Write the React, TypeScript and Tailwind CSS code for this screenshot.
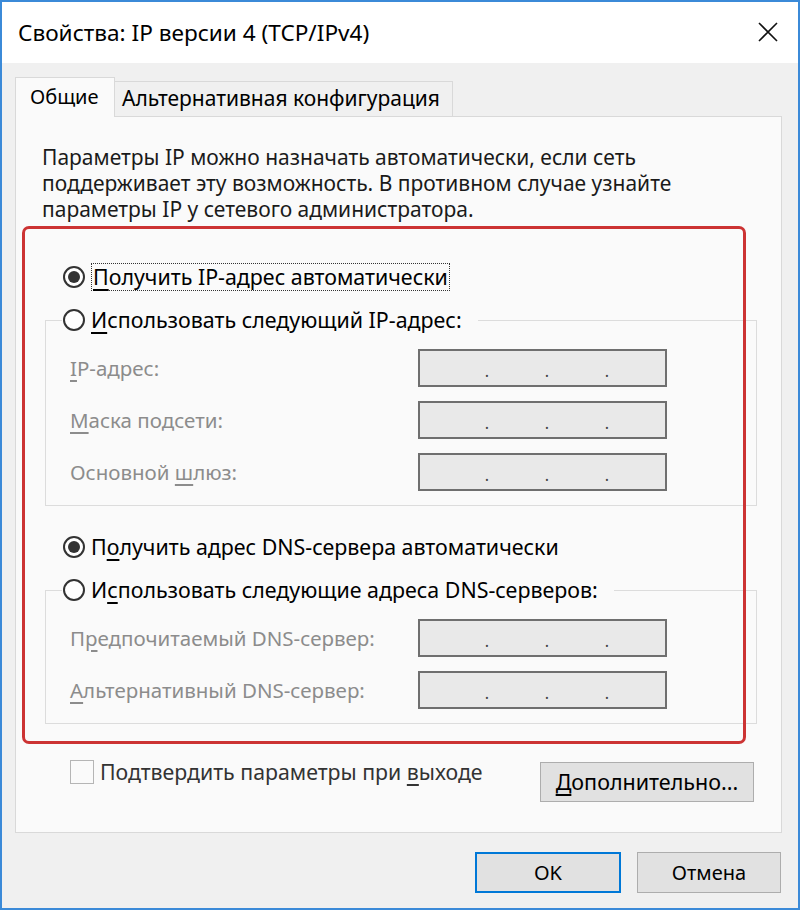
import React from "react";

const font = { fontFamily: '"Noto Sans", "Open Sans", sans-serif' };

const Radio = ({ checked }: { checked?: boolean }) => (
  <span className="flex h-[22px] w-[22px] shrink-0 items-center justify-center rounded-full border-2 border-[#333] bg-white">
    {checked && <span className="h-[12px] w-[12px] rounded-full bg-[#333]" />}
  </span>
);

const IpInput = () => (
  <div className="flex h-[38px] w-[249px] items-end border-2 border-[#6f6f6f] bg-[#e9e9e9] pb-[6px] pl-[37px] text-[16px] leading-none text-[#444]">
    <span className="w-[60px] text-center">.</span>
    <span className="w-[60px] text-center">.</span>
    <span className="w-[60px] text-center">.</span>
  </div>
);

const FieldRow = ({ label }: { label: React.ReactNode }) => (
  <>
    <div className="flex h-[38px] items-center pl-[24px] text-[20.5px] text-[#8c8c8c]">{label}</div>
    <IpInput />
  </>
);

const App = () => {
  return (
    <div
      className="flex h-[910px] w-[800px] flex-col border-2 border-[#3b8ad8] bg-[#f0f0f0] text-black"
      style={font}
    >
      <div className="flex h-[61px] shrink-0 items-center justify-between bg-white pl-[16px] pr-[20px]">
        <span className="text-[22.6px]">Свойства: IP версии 4 (TCP/IPv4)</span>
        <svg width="20" height="20" viewBox="0 0 20 20" className="mb-[2px]">
          <path d="M1 1 L19 19 M19 1 L1 19" stroke="#111" strokeWidth="1.6" />
        </svg>
      </div>

      <div className="flex flex-1 flex-col pl-[13px] pr-[16px] pt-[14px]">
        <div className="relative z-10 flex h-[40px] items-start">
          <div className="flex h-[40px] w-[100px] items-center border-x border-t border-[#d9d9d9] bg-[#fafafa] pl-[14px] pb-[2px] text-[20px]">
            Общие
          </div>
          <div className="mt-[4px] flex h-[35px] w-[338px] items-center border-r border-t border-[#d9d9d9] bg-[#f0f0f0] pl-[7px] text-[21px]">
            Альтернативная конфигурация
          </div>
        </div>

        <div className="relative -mt-px h-[717px] border border-[#d9d9d9] bg-[#fafafa]">
          <p className="pl-[26px] pt-[27px] text-[21px] leading-[26px] text-[#1a1a1a]">
            Параметры IP можно назначать автоматически, если сеть
            <br />
            поддерживает эту возможность. В противном случае узнайте
            <br />
            параметры IP у сетевого администратора.
          </p>

          <div className="ml-[47px] mt-[40px] flex h-[30px] items-center gap-[6px] text-[21.4px]">
            <Radio checked />
            <span className="border border-dotted border-[#333] px-[1px] leading-[26px]">
              <u className="underline-offset-4">П</u>олучить IP-адрес автоматически
            </span>
          </div>

          <fieldset className="ml-[29px] mt-[13px] w-[712px] border border-[#dcdcdc] pb-[14px]">
            <legend className="ml-[16px] flex h-[30px] items-center gap-[6px] pl-[1px] pr-[16px] text-[21.4px]">
              <Radio />
              <span>
                <u className="underline-offset-4">И</u>спользовать следующий IP-адрес:
              </span>
            </legend>
            <div className="grid grid-cols-[372px_249px] gap-y-[14px] pt-[14px]">
              <FieldRow label={<span><u className="underline-offset-4">I</u>P-адрес:</span>} />
              <FieldRow label={<span><u className="underline-offset-4">М</u>аска подсети:</span>} />
              <FieldRow label={<span>Основной <u className="underline-offset-4">ш</u>люз:</span>} />
            </div>
          </fieldset>

          <div className="ml-[47px] mt-[26px] flex h-[30px] items-center gap-[6px] text-[21.4px]">
            <Radio checked />
            <span>
              П<u className="underline-offset-4">о</u>лучить адрес DNS-сервера автоматически
            </span>
          </div>

          <fieldset className="ml-[29px] mt-[13px] w-[712px] border border-[#dcdcdc] pb-[14px]">
            <legend className="ml-[16px] flex h-[30px] items-center gap-[6px] pl-[1px] pr-[16px] text-[21.4px]">
              <Radio />
              <span>
                И<u className="underline-offset-4">с</u>пользовать следующие адреса DNS-серверов:
              </span>
            </legend>
            <div className="grid grid-cols-[372px_249px] gap-y-[14px] pt-[14px]">
              <FieldRow label={<span>П<u className="underline-offset-4">р</u>едпочитаемый DNS-сервер:</span>} />
              <FieldRow label={<span><u className="underline-offset-4">А</u>льтернативный DNS-сервер:</span>} />
            </div>
          </fieldset>

          <div className="ml-[54px] mr-[27px] mt-[35px] flex items-start justify-between">
            <div className="flex h-[26px] items-center gap-[6px] text-[21.3px] text-[#333]">
              <span className="h-[24px] w-[24px] border border-[#b5b5b5] bg-[#fafafa]" />
              <span>
                Подтвердить параметры при <u className="underline-offset-4">в</u>ыходе
              </span>
            </div>
            <button className="mt-[3px] h-[40px] w-[214px] border border-[#adadad] bg-[#e1e1e1] text-[21.5px]">
              <u className="underline-offset-4">Д</u>ополнительно...
            </button>
          </div>

          <div className="pointer-events-none absolute left-[6px] top-[109px] h-[518px] w-[724px] rounded-[7px] border-[3px] border-[#cc3333]" />
        </div>

        <div className="mt-[19px] flex justify-end gap-[16px] pr-px">
          <button className="h-[41px] w-[146px] border-2 border-[#0078d7] bg-[#e1e1e1] text-[20px]">OK</button>
          <button className="h-[41px] w-[144px] border border-[#adadad] bg-[#e1e1e1] text-[20px]">Отмена</button>
        </div>
      </div>
    </div>
  );
};

export default App;
